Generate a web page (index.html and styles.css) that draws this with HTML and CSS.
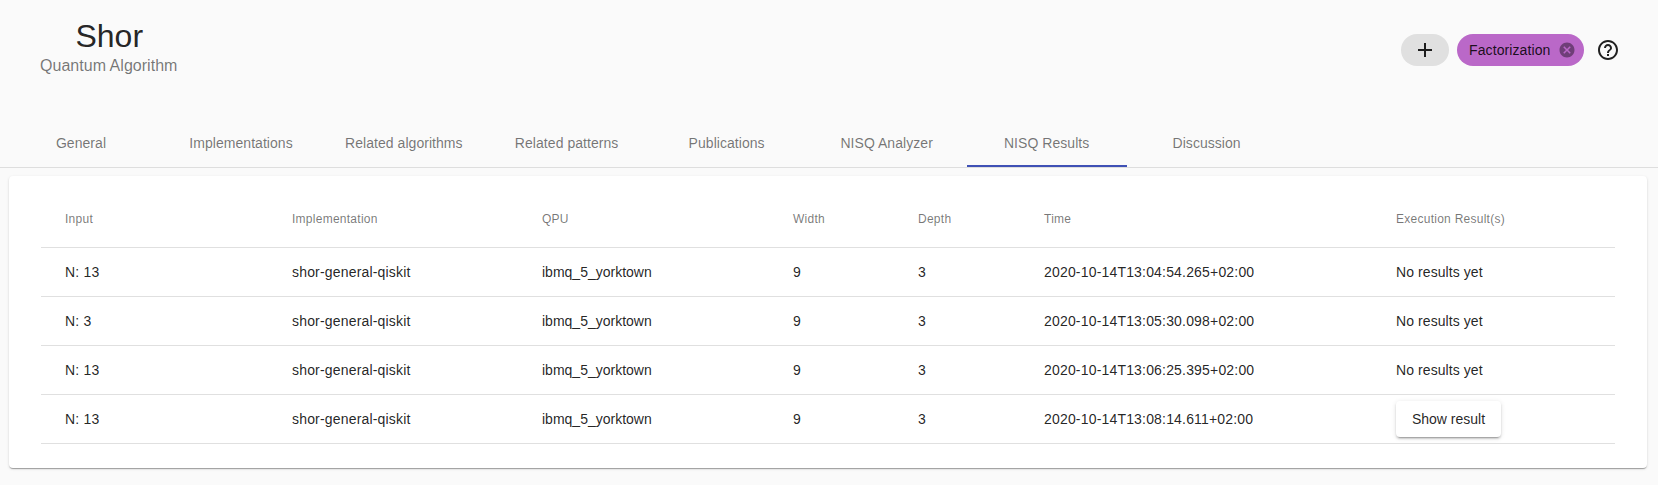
FILE: index.html
```html
<!DOCTYPE html>
<html lang="en">
<head>
<meta charset="utf-8">
<title>Shor</title>
<link rel="stylesheet" href="styles.css">
</head>
<body>
<header class="top">
  <div class="titles">
    <h1 class="name">Shor</h1>
    <div class="kind">Quantum Algorithm</div>
  </div>
  <div class="actions">
    <button class="chip chip-add" type="button" aria-label="Add">
      <svg class="icon" viewBox="0 0 24 24"><path d="M19 13h-6v6h-2v-6H5v-2h6V5h2v6h6v2z"/></svg>
    </button>
    <div class="chip chip-tag">
      <span>Factorization</span>
      <svg class="chip-x" viewBox="0 0 24 24"><path d="M12 2C6.47 2 2 6.47 2 12s4.47 10 10 10 10-4.47 10-10S17.53 2 12 2zm5 13.59L15.59 17 12 13.41 8.41 17 7 15.59 10.59 12 7 8.41 8.41 7 12 10.59 15.59 7 17 8.41 13.41 12 17 15.59z"/></svg>
    </div>
    <svg class="icon help" viewBox="0 0 24 24"><path d="M11 18h2v-2h-2v2zm1-16C6.48 2 2 6.48 2 12s4.48 10 10 10 10-4.48 10-10S17.52 2 12 2zm0 18c-4.41 0-8-3.59-8-8s3.59-8 8-8 8 3.59 8 8-3.59 8-8 8zm0-14c-2.21 0-4 1.79-4 4h2c0-1.1.9-2 2-2s2 .9 2 2c0 2-3 1.75-3 5h2c0-2.25 3-2.5 3-5 0-2.21-1.79-4-4-4z"/></svg>
  </div>
</header>
<nav class="tabs">
  <div class="tab">General</div>
  <div class="tab">Implementations</div>
  <div class="tab">Related algorithms</div>
  <div class="tab">Related patterns</div>
  <div class="tab">Publications</div>
  <div class="tab">NISQ Analyzer</div>
  <div class="tab tab-active">NISQ Results</div>
  <div class="tab">Discussion</div>
</nav>
<main class="card">
  <table class="results">
    <thead>
      <tr>
        <th class="c-input">Input</th>
        <th class="c-impl">Implementation</th>
        <th class="c-qpu">QPU</th>
        <th class="c-width">Width</th>
        <th class="c-depth">Depth</th>
        <th class="c-time">Time</th>
        <th class="c-result">Execution Result(s)</th>
      </tr>
    </thead>
    <tbody>
      <tr>
        <td>N: 13</td><td>shor-general-qiskit</td><td class="t-qpu">ibmq_5_yorktown</td><td>9</td><td>3</td><td>2020-10-14T13:04:54.265+02:00</td><td class="t-result">No results yet</td>
      </tr>
      <tr>
        <td>N: 3</td><td>shor-general-qiskit</td><td class="t-qpu">ibmq_5_yorktown</td><td>9</td><td>3</td><td>2020-10-14T13:05:30.098+02:00</td><td class="t-result">No results yet</td>
      </tr>
      <tr>
        <td>N: 13</td><td>shor-general-qiskit</td><td class="t-qpu">ibmq_5_yorktown</td><td>9</td><td>3</td><td>2020-10-14T13:06:25.395+02:00</td><td class="t-result">No results yet</td>
      </tr>
      <tr>
        <td>N: 13</td><td>shor-general-qiskit</td><td class="t-qpu">ibmq_5_yorktown</td><td>9</td><td>3</td><td>2020-10-14T13:08:14.611+02:00</td><td class="t-result"><button class="show" type="button">Show result</button></td>
      </tr>
    </tbody>
  </table>
</main>
</body>
</html>
```

FILE: styles.css
```css
* { box-sizing: border-box; }
html, body { height: 100%; }
body {
  margin: 0;
  background: #fafafa;
  color: rgba(0, 0, 0, 0.87);
  font-family: "Liberation Sans", Arial, sans-serif;
  font-size: 14px;
  overflow: hidden;
}
.top {
  display: flex;
  justify-content: space-between;
  align-items: flex-start;
  height: 119px;
  padding: 16px 0 0 40px;
}
.titles { display: flex; flex-direction: column; align-items: center; }
.name { margin: 0; padding-left: 1px; font-size: 32px; font-weight: 400; line-height: 40px; }
.kind { margin-top: 1px; font-size: 16px; line-height: 18px; letter-spacing: 0.03px; color: rgba(0, 0, 0, 0.54); }
.actions {
  display: flex;
  align-items: center;
  gap: 8px;
  padding: 18px 38px 0 0;
}
.chip {
  display: flex;
  align-items: center;
  height: 32px;
  border: 0;
  border-radius: 16px;
  font: inherit;
  color: rgba(0, 0, 0, 0.87);
}
.chip-add { width: 48px; justify-content: center; padding: 0; background: #e0e0e0; }
.chip-tag { width: 127px; padding: 0 8px 0 12px; justify-content: space-between; background: #ba68c8; letter-spacing: 0.1px; }
.icon { display: block; width: 24px; height: 24px; fill: rgba(0, 0, 0, 0.87); }
.chip-x { display: block; width: 18px; height: 18px; fill: rgba(0, 0, 0, 0.4); }
.help { margin-left: 4px; }
.tabs {
  display: flex;
  height: 49px;
  padding-left: 1px;
  border-bottom: 1px solid #dedede;
  letter-spacing: 0.05px;
}
.tab {
  display: flex;
  align-items: center;
  justify-content: center;
  flex: none;
  min-width: 160px;
  height: 48px;
  padding: 0 24px;
  color: rgba(0, 0, 0, 0.55);
}
.tab-active { padding-top: 2px; border-bottom: 2px solid #3f51b5; }
.card {
  margin: 8px 11px 0 9px;
  height: 292px;
  padding: 0 32px;
  background: #fff;
  border-radius: 4px;
  box-shadow: 0 2px 1px -1px rgba(0,0,0,.2), 0 1px 1px 0 rgba(0,0,0,.14), 0 1px 3px 0 rgba(0,0,0,.12);
}
.results { width: 100%; border-collapse: collapse; table-layout: fixed; }
.results th {
  height: 71px;
  padding: 16px 0 0 24px;
  text-align: left;
  font-size: 12px;
  font-weight: 400;
  letter-spacing: 0.26px;
  color: rgba(0, 0, 0, 0.54);
  border-bottom: 1px solid #e0e0e0;
}
.results td {
  height: 49px;
  padding: 0 0 0 24px;
  letter-spacing: 0.18px;
  border-bottom: 1px solid #e0e0e0;
}
.results .t-qpu { letter-spacing: 0; }
.results .t-result { letter-spacing: 0.08px; }
.c-input { width: 227px; }
.c-impl { width: 250px; }
.c-qpu { width: 251px; }
.c-width { width: 125px; }
.c-depth { width: 126px; }
.c-time { width: 352px; }
.show {
  display: block;
  width: 105px;
  height: 36px;
  padding: 0;
  border: 0;
  border-radius: 4px;
  background: #fff;
  font: inherit;
  letter-spacing: 0;
  color: rgba(0, 0, 0, 0.87);
  box-shadow: 0 3px 1px -2px rgba(0,0,0,.2), 0 2px 2px 0 rgba(0,0,0,.14), 0 1px 5px 0 rgba(0,0,0,.12);
}
```
